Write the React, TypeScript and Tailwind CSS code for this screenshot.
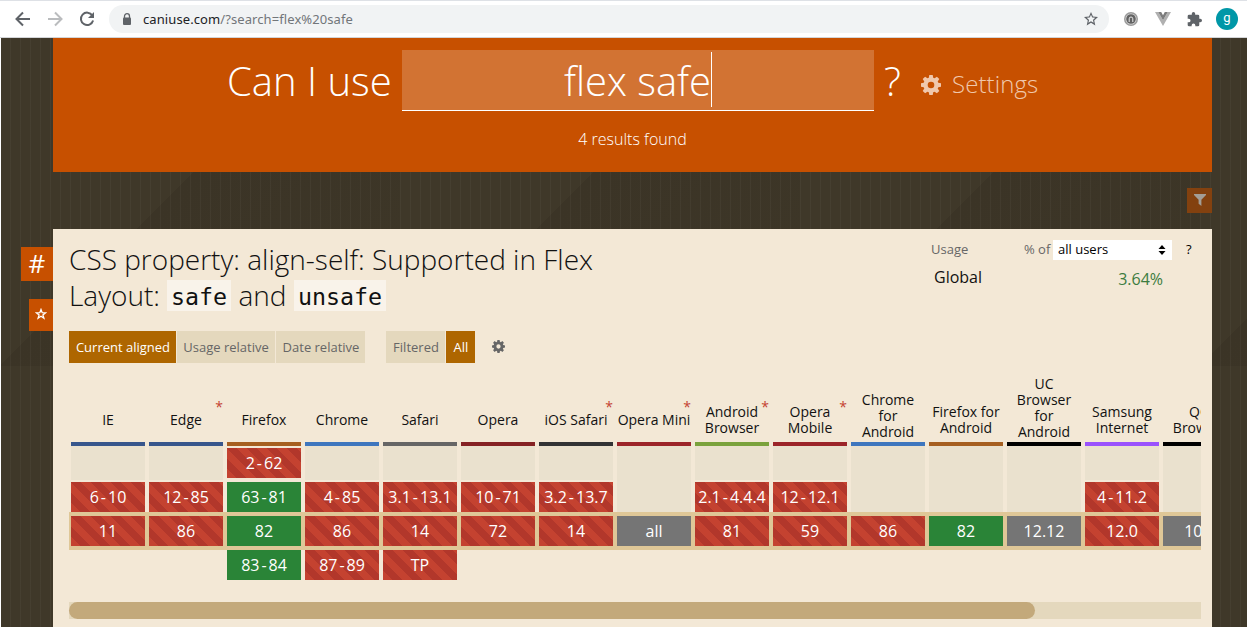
import React from 'react';

type Cell = { v: string; k: 'n' | 'y' | 'u' } | null;
type Browser = {
  name: string;
  bar: string;
  star?: boolean;
  rows: [Cell, Cell, Cell, Cell];
};

const n = (v: string): Cell => ({ v, k: 'n' });
const y = (v: string): Cell => ({ v, k: 'y' });
const u = (v: string): Cell => ({ v, k: 'u' });

const browsers: Browser[] = [
  { name: 'IE', bar: 'bg-[#37568c]', rows: [null, n('6-10'), n('11'), null] },
  { name: 'Edge', bar: 'bg-[#37568c]', star: true, rows: [null, n('12-85'), n('86'), null] },
  { name: 'Firefox', bar: 'bg-[#a65f20]', rows: [n('2-62'), y('63-81'), y('82'), y('83-84')] },
  { name: 'Chrome', bar: 'bg-[#3e76be]', rows: [null, n('4-85'), n('86'), n('87-89')] },
  { name: 'Safari', bar: 'bg-[#666666]', rows: [null, n('3.1-13.1'), n('14'), n('TP')] },
  { name: 'Opera', bar: 'bg-[#852224]', rows: [null, n('10-71'), n('72'), null] },
  { name: 'iOS Safari', bar: 'bg-[#323335]', star: true, rows: [null, n('3.2-13.7'), n('14'), null] },
  { name: 'Opera Mini', bar: 'bg-[#9c2529]', star: true, rows: [null, null, u('all'), null] },
  { name: 'Android Browser', bar: 'bg-[#7aa23c]', star: true, rows: [null, n('2.1-4.4.4'), n('81'), null] },
  { name: 'Opera Mobile', bar: 'bg-[#9c2529]', star: true, rows: [null, n('12-12.1'), n('59'), null] },
  { name: 'Chrome for Android', bar: 'bg-[#3e76be]', rows: [null, null, n('86'), null] },
  { name: 'Firefox for Android', bar: 'bg-[#a65f20]', rows: [null, null, y('82'), null] },
  { name: 'UC Browser for Android', bar: 'bg-black', rows: [null, null, u('12.12'), null] },
  { name: 'Samsung Internet', bar: 'bg-[#9a51fd]', rows: [null, n('4-11.2'), n('12.0'), null] },
  { name: 'QQ Browser', bar: 'bg-black', rows: [null, null, u('10.4'), null] },
];

const kinds = {
  n: 'bg-[#c44230] bg-[linear-gradient(45deg,#b2372b_25%,transparent_25%,transparent_50%,#b2372b_50%,#b2372b_75%,transparent_75%)] bg-[length:20px_20px]',
  y: 'bg-[#2a8437]',
  u: 'bg-[#757575]',
};

function Gear({ className }: { className: string }) {
  return (
    <svg viewBox="0 0 20 20" className={className} fill="currentColor">
      <path
        fillRule="evenodd"
        d="M8.3 0h3.4l.5 2.7 1.4.6L15.900 1.700l2.400 2.400-1.600 2.300.6 1.400 2.700.5v3.400l-2.700.5-.6 1.400 1.600 2.300-2.400 2.400-2.300-1.600-1.400.6-.5 2.700H8.300l-.5-2.700-1.400-.6-2.300 1.600-2.400-2.400 1.600-2.300-.6-1.400L0 11.700V8.300l2.700-.5.6-1.400L1.700 4.100l2.400-2.400 2.300 1.600 1.400-.6zM10 6.700a3.300 3.300 0 1 0 0 6.600 3.300 3.300 0 0 0 0-6.600z"
      />
    </svg>
  );
}

function Version({ cell }: { cell: NonNullable<Cell> }) {
  const [from, to] = cell.v.split('-');
  return (
    <div className={`flex h-[30px] shrink-0 items-center justify-center whitespace-nowrap text-[16px] leading-[30px] text-white ${kinds[cell.k]}`}>
      {from}
      {to && <span className="mx-[2px]">-</span>}
      {to}
    </div>
  );
}

function Column({ b }: { b: Browser }) {
  const [r0, r1, r2, r3] = b.rows;
  return (
    <div className="flex w-[74px] shrink-0 flex-col">
      <div className="relative flex h-[66px] flex-col justify-end pb-[2px]">
        <div className="-mx-1 flex min-h-10 items-center justify-center text-center text-[14px] leading-4 text-[#111]">
          <span className={b.name === 'Opera Mini' || b.name === 'iOS Safari' ? 'whitespace-nowrap' : 'w-[74px]'}>{b.name}</span>
        </div>
        {b.star && <span className="absolute right-0 top-[23px] text-[14px] leading-4 text-[#c44230]">*</span>}
      </div>
      <div className={`h-1 ${b.bar}`} />
      {r0 ? (
        <div className="h-9 pt-[2px]"><Version cell={r0} /></div>
      ) : r1 ? (
        <div className="mb-[2px] h-[34px] bg-[#eae1ce]" />
      ) : (
        <div className="h-[66px] bg-[#eae1ce]" />
      )}
      {r1 && <Version cell={r1} />}
      <div className="-mx-[2px] bg-[#dfc797] px-[2px] py-1">{r2 && <Version cell={r2} />}</div>
      {r3 && <Version cell={r3} />}
    </div>
  );
}

function Toolbar() {
  return (
    <div className="flex h-[38px] shrink-0 items-center border-y border-t-[#dee1e6] border-b-[#d3d5d8] bg-white pl-[15px] text-[#5f6368]">
      <svg className="h-4 w-4" viewBox="0 0 16 16" fill="none" stroke="currentColor" strokeWidth="2"><path d="M15 8H2.500M8 1.500 1.500 8 8 14.500" /></svg>
      <svg className="ml-4 h-4 w-4 text-[#babcbe]" viewBox="0 0 16 16" fill="none" stroke="currentColor" strokeWidth="2"><path d="M1 8h12.500M8 1.500 14.500 8 8 14.500" /></svg>
      <svg className="ml-4 h-4 w-4" viewBox="0 0 16 16" fill="none"><path d="M13.300 4.400A6.200 6.200 0 1 0 14.100 9.500" stroke="currentColor" strokeWidth="2" /><path d="M15 1v6H9z" fill="currentColor" /></svg>
      <div className="ml-[14px] flex h-7 w-[1000px] items-center rounded-full bg-[#f1f3f4] pl-[13px]">
        <svg className="h-[13px] w-[10px]" viewBox="0 0 10 13"><path d="M2.500 5V3.200a2.500 2.500 0 0 1 5 0V5" fill="none" stroke="currentColor" strokeWidth="1.300" /><rect x="1" y="4.500" width="8" height="7.500" rx="1" fill="currentColor" /></svg>
        <span className="ml-[11px] font-['Noto_Sans',sans-serif] text-[13px] leading-none tracking-[0.09px] text-[#72767a]"><span className="text-[#202124]">caniuse.com</span>/?search=flex%20safe</span>
        <svg className="ml-auto mr-[11px] h-[14px] w-[14px]" viewBox="0 0 24 24" fill="currentColor"><path d="M24 8.700l-8.600-.8L12 0 8.600 7.900 0 8.700l6.500 5.700L4.600 23 12 18.400 19.400 23l-1.900-8.600zM12 15.900l-4.500 2.700 1.200-5.100-4-3.500 5.200-.5L12 4.700l2.100 4.800 5.200.5-4 3.500 1.200 5.100z" /></svg>
      </div>
      <svg className="ml-[15px] h-[14px] w-[14px]" viewBox="0 0 14 14"><circle cx="7" cy="7" r="7" fill="#9b9b9b" /><circle cx="7" cy="7" r="5.500" fill="#dedede" /><circle cx="7" cy="7" r="4.800" fill="#626262" /><path d="M5.200 10V6.800a1.800 1.800 0 0 1 3.600 0V10" fill="none" stroke="#e8e8e8" strokeWidth="1" /></svg>
      <svg className="ml-[17px] h-[14px] w-4" viewBox="0 0 16 14"><path d="M0 0h3.200L8 8.300 12.800 0H16L8 14z" fill="#b0b0b0" /><path d="M3.200 0h3L8 3.200 9.800 0h3L8 8.300z" fill="#7d7d7d" /></svg>
      <svg className="ml-4 h-[15px] w-[15px]" viewBox="1 1 22 22" fill="currentColor"><path d="M20.500 11H19V7a2 2 0 0 0-2-2h-4V3.500a2.500 2.500 0 0 0-5 0V5H4a2 2 0 0 0-2 2v3.800h1.500a2.700 2.700 0 0 1 0 5.400H2V20a2 2 0 0 0 2 2h3.800v-1.500a2.700 2.700 0 0 1 5.400 0V22H17a2 2 0 0 0 2-2v-4h1.500a2.500 2.500 0 0 0 0-5z" /></svg>
      <div className="ml-[14px] flex h-[22px] w-[22px] items-center justify-center rounded-full bg-[#0097a7] font-[Roboto,sans-serif] text-[13px] leading-none text-white"><span className="-mt-[3px]">g</span></div>
    </div>
  );
}

export default function App() {
  return (
    <div className="flex h-[627px] w-[1247px] flex-col overflow-hidden bg-white font-['Open_Sans',sans-serif]">
      <Toolbar />
      <div className="ml-px flex min-h-0 flex-1 flex-col bg-[repeating-linear-gradient(90deg,transparent_0px,transparent_9px,#ffffff09_9px,#ffffff09_10px),linear-gradient(135deg,#3f3829_50%,#3b3426_50%,#3e3728_100%)] bg-[length:auto,400px_400px] bg-[position:0px_0px,-1px_-72px] pl-[52px] pr-[35px]">
        <header className="h-[134px] shrink-0 bg-[#c75000] pt-3 text-white">
          <div className="flex h-[61px] pl-[174px] font-light">
            <span className="w-[175px] whitespace-nowrap text-[40px] leading-[61px]">Can I use</span>
            <div className="flex h-[61px] w-[472px] justify-center border-b border-white bg-white/20">
              <span className="h-[57px] whitespace-nowrap text-[40px] leading-[61px]">flex safe</span>
              <span className="mt-[2px] h-[55px] w-px bg-white" />
            </div>
            <span className="ml-[10px] w-[37px] text-[40px] leading-[61px]">?</span>
            <Gear className="mt-[25px] h-5 w-5 text-[#f0c8ac]" />
            <span className="ml-[11px] whitespace-nowrap text-[24px] leading-[68px] tracking-[0.1px] text-[#f0c8ac]">Settings</span>
          </div>
          <p className="mt-4 text-center text-[16px] font-light leading-6">4 results found</p>
        </header>
        <div className="flex h-[57px] shrink-0 justify-end pt-4">
          <div className="flex h-[25px] w-[25px] items-start justify-center bg-[#83410f] pt-[6px] text-[#a39e96]">
            <svg className="h-3 w-3" viewBox="0 0 12 12" fill="currentColor"><path d="M0 0h12v1L7.400 5.700V12L4.600 9.800V5.700L0 1z" /></svg>
          </div>
        </div>
        <main className="relative flex min-h-0 flex-1 flex-col bg-[#f3e8d6] pl-4 pr-[11px] pt-3">
          <div className="absolute right-full top-[18px] flex h-[34px] w-8 items-center justify-center bg-[#c75000] text-[26px] leading-none text-white"><span className="-mt-[3px]">#</span></div>
          <div className="absolute right-full top-[70px] flex h-8 w-6 items-center justify-center bg-[#c75000] pb-[2px] text-white">
            <svg className="h-3 w-3" viewBox="0 0 12 12" fill="none" stroke="currentColor" strokeWidth="1.300"><path d="M6 1.500 7.200 4.700l3.400.1-2.700 2.100 1 3.300L6 8.300l-2.900 1.900 1-3.300L1.400 4.800l3.400-.1z" /></svg>
          </div>
          <div className="flex h-[90px]">
            <h1 className="w-[862px] text-[28px] font-light leading-9 text-[#111]">
              <span className="block whitespace-nowrap">CSS property: align-self: Supported in Flex</span>
              <span className="flex items-center whitespace-nowrap">
                <span className="w-[98px]">Layout:</span>
                <code className="h-[31px] w-16 bg-[#f9f3ea] text-center font-['DejaVu_Sans_Mono',monospace] text-[23.300px] leading-[34px]">safe</code>
                <span className="w-[63px] text-center">and</span>
                <code className="h-[31px] w-[92px] bg-[#f9f3ea] text-center font-['DejaVu_Sans_Mono',monospace] text-[23.300px] leading-[34px]">unsafe</code>
              </span>
            </h1>
            <div className="flex-1">
              <div className="-mt-[1px] flex h-5 items-center whitespace-nowrap text-[13px] leading-5 text-[#666]">
                <span className="-mt-[2px] w-[93px]">Usage</span>
                <span className="-mt-[2px] w-[29px]">% of</span>
                <span className="flex h-5 w-[119px] items-center justify-between bg-white pl-[5px] pr-[6px] text-black">
                  <span className="-mt-[2px]">all users</span>
                  <svg className="h-[10px] w-[8px]" viewBox="0 0 8 10"><path d="M4 0l3.500 4h-7zM4 10l3.500-4h-7z" /></svg>
                </span>
                <span className="-mt-[2px] ml-[14px] text-black">?</span>
              </div>
              <div className="flex w-[232px] justify-between pl-[3px] pt-[5px] text-[16px] leading-6 text-[#111]">
                <span>Global</span>
                <span className="pt-[2px] text-[#3c7c40]">3.64%</span>
              </div>
            </div>
          </div>
          <div className="flex h-8 shrink-0 whitespace-nowrap text-center text-[13px] leading-8 text-[#666]">
            <span className="w-[107px] bg-[#ae6600] pl-px text-white">Current aligned</span>
            <span className="ml-px w-[98px] bg-[#e4d8bd]">Usage relative</span>
            <span className="ml-px w-[89px] bg-[#e4d8bd] pl-px">Date relative</span>
            <span className="ml-[21px] w-[59px] bg-[#e4d8bd] pl-px">Filtered</span>
            <span className="ml-px w-[29px] bg-[#ae6600] pl-px text-white">All</span>
            <Gear className="ml-[17px] mt-[9px] h-[13px] w-[13px] text-[#666]" />
          </div>
          <div className="mt-[13px] flex h-[226px] w-[1132px] shrink-0 gap-1 overflow-hidden pl-[2px]">
            {browsers.map((b) => (
              <Column key={b.name} b={b} />
            ))}
          </div>
          <div className="h-[17px] w-[1132px] shrink-0 bg-[#e4d8bd]">
            <div className="h-full w-[966px] rounded-full bg-[#c3a97b]" />
          </div>
        </main>
      </div>
    </div>
  );
}
